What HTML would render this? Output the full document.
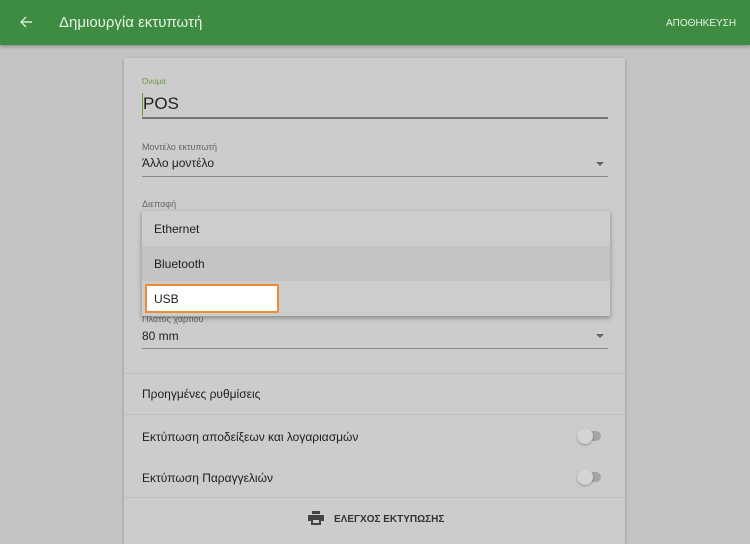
<!DOCTYPE html>
<html><head><meta charset="utf-8"><style>
*{margin:0;padding:0;box-sizing:border-box}
body{width:750px;height:544px;overflow:hidden;background:#c4c4c4;font-family:"Liberation Sans",sans-serif;position:relative;color:#202020}
.a{position:absolute;white-space:nowrap}
.hdr{left:0;top:0;width:750px;height:45px;background:#3d8c41;box-shadow:0 2px 3px rgba(0,0,0,.25)}
.card{left:124px;top:58px;width:501px;height:486px;background:#cccccc;box-shadow:0 1px 3px rgba(0,0,0,.3)}
.lbl{font-size:9px;color:#666}
.line{height:1px;background:#8a8a8a}
.sep{left:124px;width:501px;height:1px;background:#bdbdbd}
.tri{width:0;height:0;border-left:4px solid transparent;border-right:4px solid transparent;border-top:4px solid #666}
.tg{width:22px;height:10px;border-radius:5px;background:#a5a5a5}
.tg i{position:absolute;left:-2px;top:-3px;width:16px;height:16px;border-radius:50%;background:#d4d4d4;box-shadow:0 1px 2px rgba(0,0,0,.3)}
</style></head><body>
<div class="a hdr"></div>
<svg class="a" style="left:19px;top:15px" width="14" height="14" viewBox="0 0 14 14"><path d="M13 7H2M7 2L2 7l5 5" stroke="#d8ecd8" stroke-width="1.4" fill="none"/></svg>
<div class="a" style="left:59px;top:14px;font-size:15px;color:#e6f2e6">Δημιουργία εκτυπωτή</div>
<div class="a" style="left:666px;top:18px;font-size:10px;color:#e6f2e6">ΑΠΟΘΗΚΕΥΣΗ</div>
<div class="a card"></div>
<div class="a" style="left:142px;top:77px;font-size:8px;color:#6a9a3a">Όνομα</div>
<div class="a" style="left:142px;top:93px;width:1px;height:23px;background:#6a9a3a"></div>
<div class="a" style="left:143px;top:94px;font-size:17px;color:#222">POS</div>
<div class="a" style="left:142px;top:117px;width:466px;height:2px;background:#757575"></div>
<div class="a lbl" style="left:142px;top:142px">Μοντέλο εκτυπωτή</div>
<div class="a" style="left:142px;top:156px;font-size:12px">Άλλο μοντέλο</div>
<div class="a tri" style="left:596px;top:162px"></div>
<div class="a line" style="left:142px;top:176px;width:466px"></div>
<div class="a lbl" style="left:142px;top:199px">Διεπαφή</div>
<div class="a lbl" style="left:142px;top:314px">Πλάτος χαρτιού</div>
<div class="a" style="left:142px;top:329px;font-size:12px">80 mm</div>
<div class="a tri" style="left:596px;top:334px"></div>
<div class="a line" style="left:142px;top:348px;width:466px"></div>
<div class="a sep" style="top:373px"></div>
<div class="a" style="left:142px;top:387px;font-size:12px">Προηγμένες ρυθμίσεις</div>
<div class="a sep" style="top:414px"></div>
<div class="a" style="left:142px;top:430px;font-size:12px">Εκτύπωση αποδείξεων και λογαριασμών</div>
<div class="a tg" style="left:579px;top:431px"><i></i></div>
<div class="a" style="left:142px;top:471px;font-size:12px">Εκτύπωση Παραγγελιών</div>
<div class="a tg" style="left:579px;top:472px"><i></i></div>
<div class="a sep" style="top:497px"></div>
<svg class="a" style="left:308px;top:511px" width="16" height="14" viewBox="0 0 16 14"><path d="M4 0h8v3H4z M1 4h14a1 1 0 0 1 1 1v5h-3v4H3v-4H0V5a1 1 0 0 1 1-1z" fill="#444"/><rect x="5" y="9" width="6" height="3" fill="#ccc"/></svg>
<div class="a" style="left:334px;top:514px;font-size:10px;font-weight:bold;color:#333">ΕΛΕΓΧΟΣ ΕΚΤΥΠΩΣΗΣ</div>
<div class="a" style="left:142px;top:211px;width:468px;height:105px;background:#cdcdcd;box-shadow:0 2px 5px rgba(0,0,0,.35)"></div>
<div class="a" style="left:142px;top:246px;width:468px;height:35px;background:#c4c4c4"></div>
<div class="a" style="left:154px;top:222px;font-size:12px">Ethernet</div>
<div class="a" style="left:154px;top:257px;font-size:12px">Bluetooth</div>
<div class="a" style="left:145px;top:284px;width:134px;height:29px;background:#fff;border:2px solid #f08a35"></div>
<div class="a" style="left:154px;top:292px;font-size:12px">USB</div>
</body></html>
